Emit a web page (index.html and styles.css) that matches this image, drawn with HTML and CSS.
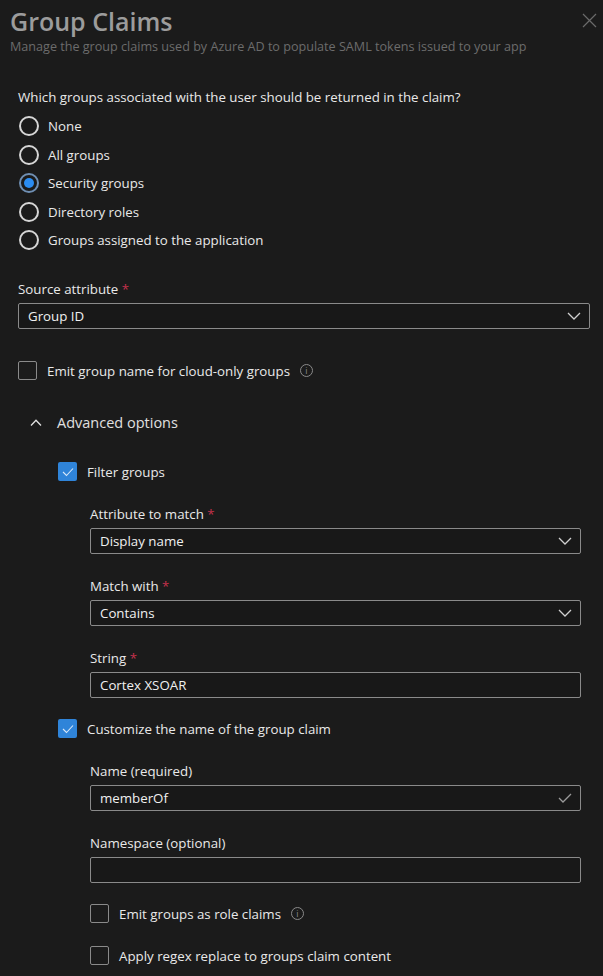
FILE: index.html
```html
<!DOCTYPE html>
<html lang="en">
<head>
    <meta charset="UTF-8">
    <meta name="viewport" content="width=device-width, initial-scale=1.0">
    <title>Group Claims</title>
    <link rel="stylesheet" href="styles.css">
</head>
<body>
    <div class="panel">
        <div class="panel-header">
            <div>
                <h1>Group Claims</h1>
                <p class="subtitle">Manage the group claims used by Azure AD to populate SAML tokens issued to your app</p>
            </div>
            <button class="close" type="button" aria-label="Close">
                <svg width="15" height="15" viewBox="0 0 15 15"><path d="M1 1 L14 14 M14 1 L1 14" stroke="currentColor" stroke-width="1.2"/></svg>
            </button>
        </div>

        <form class="claims-form">
            <p class="question">Which groups associated with the user should be returned in the claim?</p>
            <div class="radio-list">
                <label class="radio"><span class="dot"></span>None</label>
                <label class="radio"><span class="dot"></span>All groups</label>
                <label class="radio checked"><span class="dot"></span>Security groups</label>
                <label class="radio"><span class="dot"></span>Directory roles</label>
                <label class="radio"><span class="dot"></span>Groups assigned to the application</label>
            </div>

            <div class="field source">
                <label class="field-label">Source attribute <span class="req">*</span></label>
                <div class="select">Group ID
                    <svg class="chev" width="14" height="8" viewBox="0 0 14 8"><path d="M1 1 L7 7 L13 1" fill="none" stroke="currentColor" stroke-width="1.3"/></svg>
                </div>
            </div>

            <label class="check emit">
                <span class="box"></span>Emit group name for cloud-only groups
                <span class="info">i</span>
            </label>

            <div class="advanced">
                <div class="advanced-toggle">
                    <svg width="12" height="7" viewBox="0 0 12 7"><path d="M1 6.5 L6 1.2 L11 6.5" fill="none" stroke="currentColor" stroke-width="1.3"/></svg>
                    Advanced options
                </div>

                <div class="advanced-body">
                    <label class="check filter">
                        <span class="box on"><svg width="12" height="10" viewBox="0 0 12 10"><path d="M1 5 L4.5 8.5 L11 1.5" fill="none" stroke="currentColor" stroke-width="1.1"/></svg></span>Filter groups
                    </label>

                    <div class="nested">
                        <div class="field first">
                            <label class="field-label">Attribute to match <span class="req">*</span></label>
                            <div class="select">Display name
                                <svg class="chev" width="14" height="8" viewBox="0 0 14 8"><path d="M1 1 L7 7 L13 1" fill="none" stroke="currentColor" stroke-width="1.3"/></svg>
                            </div>
                        </div>
                        <div class="field">
                            <label class="field-label">Match with <span class="req">*</span></label>
                            <div class="select">Contains
                                <svg class="chev" width="14" height="8" viewBox="0 0 14 8"><path d="M1 1 L7 7 L13 1" fill="none" stroke="currentColor" stroke-width="1.3"/></svg>
                            </div>
                        </div>
                        <div class="field">
                            <label class="field-label">String <span class="req">*</span></label>
                            <div class="select">Cortex XSOAR</div>
                        </div>
                    </div>

                    <label class="check customize">
                        <span class="box on"><svg width="12" height="10" viewBox="0 0 12 10"><path d="M1 5 L4.5 8.5 L11 1.5" fill="none" stroke="currentColor" stroke-width="1.1"/></svg></span>Customize the name of the group claim
                    </label>

                    <div class="nested">
                        <div class="field first">
                            <label class="field-label">Name (required)</label>
                            <div class="select">memberOf
                                <svg class="chev ok" width="14" height="10" viewBox="0 0 14 10"><path d="M1 5 L5 9 L13 1" fill="none" stroke="currentColor" stroke-width="1.3"/></svg>
                            </div>
                        </div>
                        <div class="field">
                            <label class="field-label">Namespace (optional)</label>
                            <div class="select"></div>
                        </div>

                        <label class="check role">
                            <span class="box"></span>Emit groups as role claims
                            <span class="info">i</span>
                        </label>
                        <label class="check regex">
                            <span class="box"></span>Apply regex replace to groups claim content
                        </label>
                    </div>
                </div>
            </div>
        </form>
    </div>
</body>
</html>
```

FILE: styles.css
```css
body {
    margin: 0;
    background: #1b1b1b;
    font-family: "Open Sans", "Noto Sans", sans-serif;
    font-size: 13.3px;
    color: #e9e9e9;
}
.panel {
    padding: 4px 13px 0 18px;
}
.panel-header {
    display: flex;
    justify-content: space-between;
    margin-left: -8px;
    margin-right: -7px;
}
h1 {
    margin: 0;
    font-size: 25px;
    font-weight: 600;
    line-height: 34px;
    color: #9c9c9c;
}
.subtitle {
    margin: 0;
    font-size: 12.6px;
    line-height: 18px;
    color: #6c6c6c;
}
.close {
    background: none;
    border: none;
    color: #6a6a6a;
    padding: 0;
    margin-top: 8px;
    height: 20px;
}
.question {
    margin: 32px 0 0;
    line-height: 18px;
}
.radio-list {
    margin-top: 6px;
}
.radio {
    display: flex;
    align-items: center;
    height: 28.5px;
}
.dot {
    width: 16px;
    height: 16px;
    border: 2px solid #d6d6d6;
    border-radius: 50%;
    margin: 0 9px 0 1px;
    display: flex;
    align-items: center;
    justify-content: center;
}
.radio.checked .dot {
    border-color: #6f8fb3;
}
.radio.checked .dot::after {
    content: "";
    width: 10px;
    height: 10px;
    border-radius: 50%;
    background: #2a8cf2;
}
.field {
    margin-top: 23px;
}
.field.source {
    margin-top: 25px;
}
.field.first {
    margin-top: 23px;
}
.field-label {
    display: block;
    line-height: 18px;
    margin-bottom: 5px;
}
.req {
    color: #c4314b;
}
.select {
    position: relative;
    height: 24px;
    border: 1px solid #8a8a8a;
    border-radius: 2px;
    background: #181818;
    padding: 0 9px;
    line-height: 24px;
    color: #f0f0f0;
}
.chev {
    position: absolute;
    right: 8px;
    top: 8px;
    color: #d0d0d0;
}
.chev.ok {
    top: 7px;
    color: #9a9a9a;
}
.check {
    display: flex;
    align-items: center;
    height: 20px;
}
.box {
    box-sizing: border-box;
    width: 19px;
    height: 19px;
    border: 1.5px solid #8a8a8a;
    border-radius: 2px;
    margin-right: 10px;
    display: flex;
    align-items: center;
    justify-content: center;
}
.box.on {
    width: 19px;
    height: 19px;
    border: none;
    background: #2f84d9;
    color: #d8e8fa;
}
.info {
    width: 11px;
    height: 11px;
    border: 1px solid #8a8a8a;
    border-radius: 50%;
    margin-left: 10px;
    font-size: 9px;
    line-height: 11px;
    text-align: center;
    color: #8a8a8a;
}
.check.emit {
    margin-top: 32px;
}
.advanced {
    margin-top: 32px;
    padding-left: 12px;
}
.advanced-toggle {
    display: flex;
    align-items: center;
    gap: 15px;
    height: 20px;
    font-size: 14.5px;
    color: #e0e0e0;
}
.advanced-body {
    padding-left: 28px;
}
.check.filter {
    margin-top: 29px;
}
.nested {
    padding-left: 32px;
    padding-right: 9px;
}
.check.customize {
    margin-top: 21px;
}
.check.role {
    margin-top: 21px;
}
.check.regex {
    margin-top: 22px;
}
```
